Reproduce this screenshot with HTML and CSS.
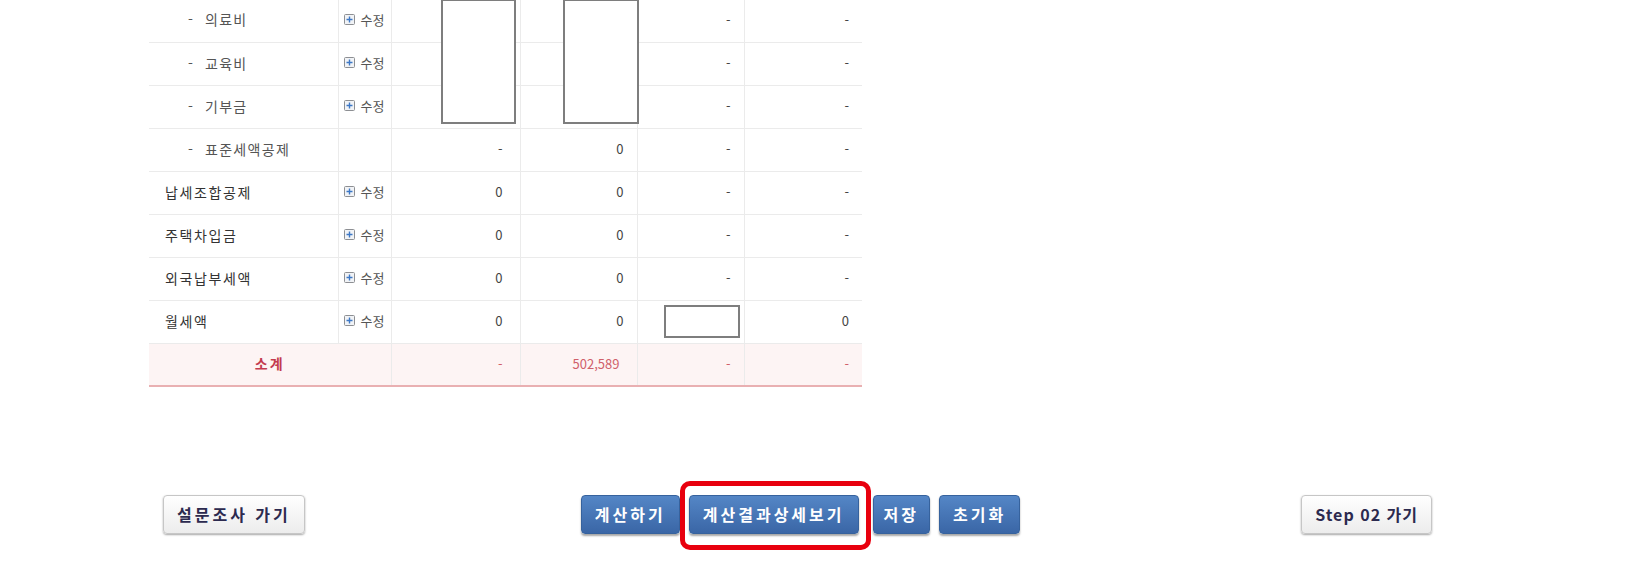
FILE: index.html
```html
<!DOCTYPE html>
<html lang="ko">
<head>
  <meta charset="UTF-8">
  <title>세액공제 계산</title>
  <link rel="stylesheet" href="styles.css">
</head>
<body>

  <div class="calc-wrap">
    <table class="calc-table">
      <colgroup>
        <col class="c-name"><col class="c-edit"><col class="c-a"><col class="c-b"><col class="c-c"><col class="c-d">
      </colgroup>
      <tr>
        <td class="name sub"><span class="dash">-</span>의료비</td>
        <td class="edit"><a href="#"><svg width="11" height="11" viewBox="0 0 11 11"><rect x="0.5" y="0.5" width="10" height="10" rx="1" fill="#f1f3f6" stroke="#8d8f93"/><path d="M5.5 2.5v6M2.5 5.5h6" stroke="#3d78c6" stroke-width="1.4"/></svg>수정</a></td>
        <td class="num"></td>
        <td class="num"></td>
        <td class="num">-</td>
        <td class="num">-</td>
      </tr>
      <tr>
        <td class="name sub"><span class="dash">-</span>교육비</td>
        <td class="edit"><a href="#"><svg width="11" height="11" viewBox="0 0 11 11"><rect x="0.5" y="0.5" width="10" height="10" rx="1" fill="#f1f3f6" stroke="#8d8f93"/><path d="M5.5 2.5v6M2.5 5.5h6" stroke="#3d78c6" stroke-width="1.4"/></svg>수정</a></td>
        <td class="num"></td>
        <td class="num"></td>
        <td class="num">-</td>
        <td class="num">-</td>
      </tr>
      <tr>
        <td class="name sub"><span class="dash">-</span>기부금</td>
        <td class="edit"><a href="#"><svg width="11" height="11" viewBox="0 0 11 11"><rect x="0.5" y="0.5" width="10" height="10" rx="1" fill="#f1f3f6" stroke="#8d8f93"/><path d="M5.5 2.5v6M2.5 5.5h6" stroke="#3d78c6" stroke-width="1.4"/></svg>수정</a></td>
        <td class="num"></td>
        <td class="num"></td>
        <td class="num">-</td>
        <td class="num">-</td>
      </tr>
      <tr>
        <td class="name sub"><span class="dash">-</span>표준세액공제</td>
        <td class="edit"></td>
        <td class="num">-</td>
        <td class="num">0</td>
        <td class="num">-</td>
        <td class="num">-</td>
      </tr>
      <tr>
        <td class="name">납세조합공제</td>
        <td class="edit"><a href="#"><svg width="11" height="11" viewBox="0 0 11 11"><rect x="0.5" y="0.5" width="10" height="10" rx="1" fill="#f1f3f6" stroke="#8d8f93"/><path d="M5.5 2.5v6M2.5 5.5h6" stroke="#3d78c6" stroke-width="1.4"/></svg>수정</a></td>
        <td class="num">0</td>
        <td class="num">0</td>
        <td class="num">-</td>
        <td class="num">-</td>
      </tr>
      <tr>
        <td class="name">주택차입금</td>
        <td class="edit"><a href="#"><svg width="11" height="11" viewBox="0 0 11 11"><rect x="0.5" y="0.5" width="10" height="10" rx="1" fill="#f1f3f6" stroke="#8d8f93"/><path d="M5.5 2.5v6M2.5 5.5h6" stroke="#3d78c6" stroke-width="1.4"/></svg>수정</a></td>
        <td class="num">0</td>
        <td class="num">0</td>
        <td class="num">-</td>
        <td class="num">-</td>
      </tr>
      <tr>
        <td class="name">외국납부세액</td>
        <td class="edit"><a href="#"><svg width="11" height="11" viewBox="0 0 11 11"><rect x="0.5" y="0.5" width="10" height="10" rx="1" fill="#f1f3f6" stroke="#8d8f93"/><path d="M5.5 2.5v6M2.5 5.5h6" stroke="#3d78c6" stroke-width="1.4"/></svg>수정</a></td>
        <td class="num">0</td>
        <td class="num">0</td>
        <td class="num">-</td>
        <td class="num">-</td>
      </tr>
      <tr>
        <td class="name">월세액</td>
        <td class="edit"><a href="#"><svg width="11" height="11" viewBox="0 0 11 11"><rect x="0.5" y="0.5" width="10" height="10" rx="1" fill="#f1f3f6" stroke="#8d8f93"/><path d="M5.5 2.5v6M2.5 5.5h6" stroke="#3d78c6" stroke-width="1.4"/></svg>수정</a></td>
        <td class="num">0</td>
        <td class="num">0</td>
        <td class="num"></td>
        <td class="num">0</td>
      </tr>
      <tr class="total">
        <td class="total-label" colspan="2">소계</td>
        <td class="num">-</td>
        <td class="num">502,589</td>
        <td class="num">-</td>
        <td class="num">-</td>
      </tr>
    </table>

    <!-- input boxes sit over the rows -->
    <textarea class="over-box box-a"></textarea>
    <textarea class="over-box box-b"></textarea>
    <input type="text" class="over-box box-c">
  </div>

  <div class="btn-bar">
    <div class="bar-left">
      <button class="btn-grey">설문조사 가기</button>
    </div>
    <div class="bar-center">
      <button class="btn-blue">계산하기</button>
      <span class="marked"><button class="btn-blue">계산결과상세보기</button></span>
      <button class="btn-blue btn-short">저장</button>
      <button class="btn-blue">초기화</button>
    </div>
    <div class="bar-right">
      <button class="btn-grey btn-step">Step 02 가기</button>
    </div>
  </div>

</body>
</html>
```

FILE: styles.css
```css
body {
  margin: 0;
  background-color: #fff;
  font-family: "Noto Sans CJK KR", "Noto Sans", sans-serif;
  color: #3a3a3a;
}
.calc-wrap {
  position: relative;
  width: 713px;
  margin: -1px 0 0 149px;
}
.calc-table {
  width: 713px;
  border-collapse: collapse;
  table-layout: fixed;
}
.c-name { width: 189px; }
.c-edit { width: 53px; }
.c-a { width: 129px; }
.c-b { width: 117px; }
.c-c { width: 107px; }
.c-d { width: 118px; }
.calc-table tr {
  height: 43px;
}
.calc-table td {
  padding: 0 13px 2px 0;
  border-bottom: 1px solid #ebebeb;
  border-left: 1px solid #ebebeb;
  font-size: 13px;
  white-space: nowrap;
}
.calc-table td:first-child {
  border-left: none;
}
.name {
  padding-left: 16px !important;
  font-size: 14px !important;
  letter-spacing: 1.6px;
  color: #333;
}
.name.sub {
  padding-left: 39px !important;
  letter-spacing: 1.3px;
  color: #555;
}
.dash {
  display: inline-block;
  width: 17px;
}
.edit {
  padding-left: 5px !important;
  padding-right: 0 !important;
}
.edit a {
  display: flex;
  align-items: center;
  gap: 6px;
  color: #555;
  text-decoration: none;
  font-size: 13px;
}
.num {
  text-align: right;
  color: #444;
}
.calc-table td.num:nth-child(3) {
  padding-right: 17px;
}
.total td {
  background-color: #fdf4f4;
  border-bottom: 2px solid #e9b0b2;
  color: #d0606a;
}
.total-label {
  text-align: center;
  padding-right: 0 !important;
  font-size: 14px !important;
  font-weight: bold;
  letter-spacing: 2px;
  color: #c33a4e !important;
}
.total td.num:nth-child(2) {
  padding-right: 17px;
}
.over-box {
  position: absolute;
  box-sizing: border-box;
  margin: 0;
  padding: 0;
  border: 2px solid #7e7e7e;
  background-color: #fff;
  resize: none;
  outline: none;
}
.box-a {
  left: 292px;
  top: 0;
  width: 75px;
  height: 125px;
}
.box-b {
  left: 414px;
  top: 0;
  width: 76px;
  height: 125px;
}
.box-c {
  left: 515px;
  top: 306px;
  width: 76px;
  height: 33px;
}
.btn-bar {
  display: grid;
  grid-template-columns: 1fr auto 1fr;
  align-items: center;
  width: 1269px;
  margin: 108px 0 38px 163px;
}
.bar-right {
  text-align: right;
}
.bar-center {
  display: flex;
  gap: 9px;
  margin-left: 6px;
}
button {
  height: 39px;
  padding: 0 13px 2px;
  font-family: "Noto Sans CJK KR", "Noto Sans", sans-serif;
  font-size: 16px;
  font-weight: bold;
  letter-spacing: 3px;
  border-radius: 4px;
  cursor: pointer;
}
.btn-grey {
  color: #2c2a4f;
  background: linear-gradient(#ffffff, #ececec);
  border: 1px solid #c6c6c6;
  box-shadow: 0 1px 2px rgba(0, 0, 0, 0.35);
}
.btn-step {
  letter-spacing: 1px;
}
.btn-blue {
  color: #fff;
  background: linear-gradient(#5486c6, #3a66a6);
  border: 1px solid #36629d;
  box-shadow: 0 2px 2px rgba(0, 0, 0, 0.35);
}
.btn-short {
  padding: 0 10px 2px;
}
.marked {
  position: relative;
  display: flex;
  margin-right: 5px;
}
.marked::after {
  content: "";
  position: absolute;
  top: -14px;
  left: -9px;
  right: -12px;
  bottom: -16px;
  border: 5px solid #e8000e;
  border-radius: 10px;
}
```
